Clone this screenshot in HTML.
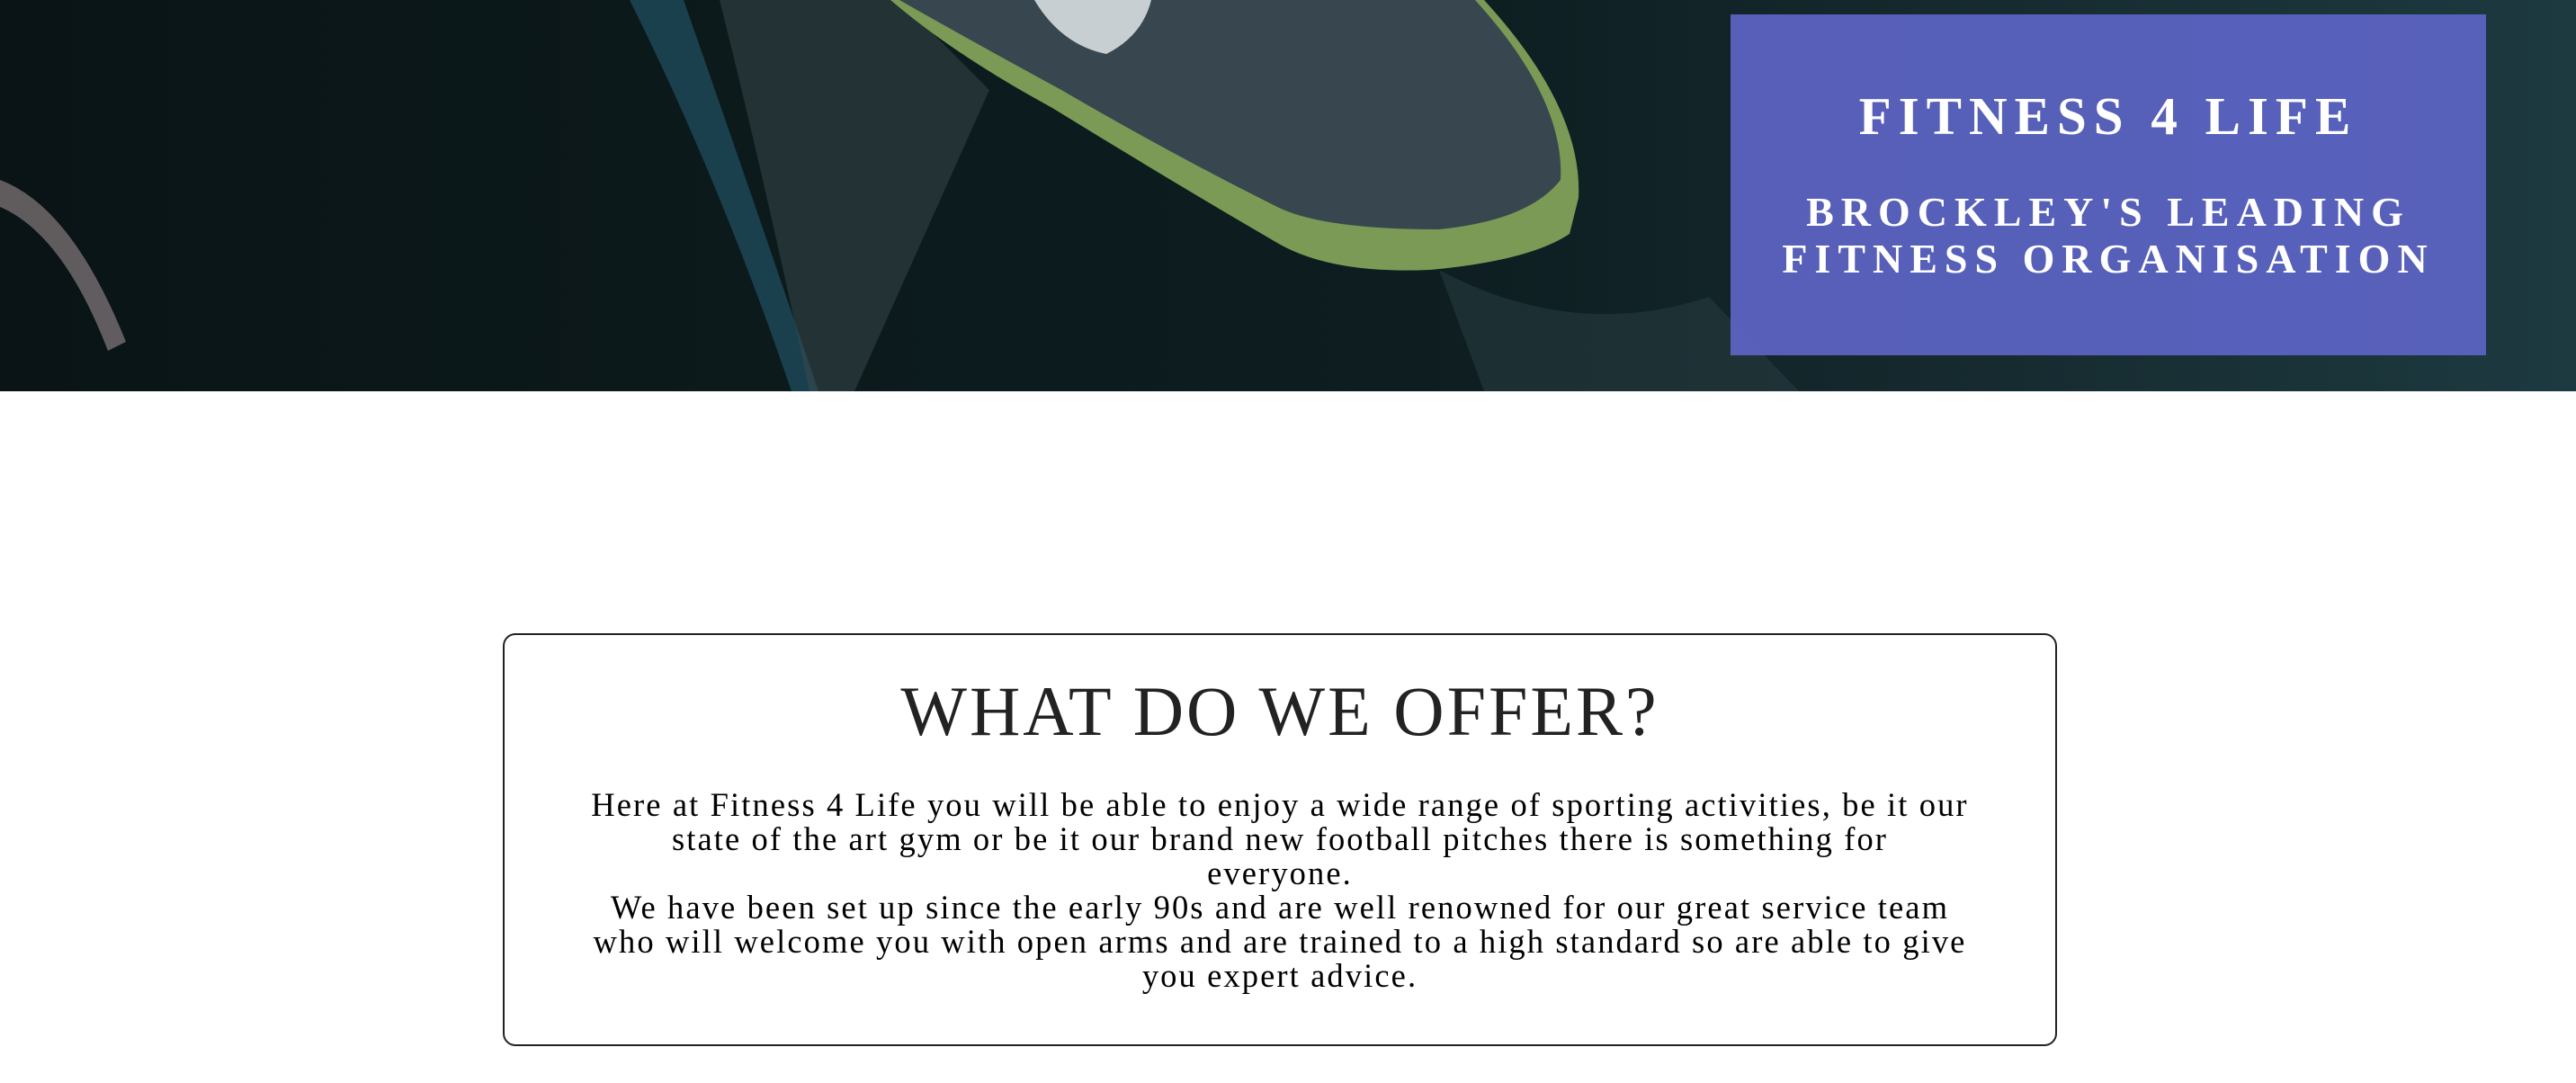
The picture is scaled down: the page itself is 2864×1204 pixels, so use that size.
<!DOCTYPE html>
<html><head><meta charset="utf-8"><style>
html,body{margin:0;padding:0;background:#fff;width:2864px;height:1204px;overflow:hidden}
.hero{position:absolute;left:0;top:0;width:2864px;height:435px;background:linear-gradient(90deg,#0a1416 0%,#0c1a1c 30%,#0d1d20 55%,#15292e 75%,#1d3a40 100%);overflow:hidden}
.box{position:absolute;left:1924px;top:16px;width:840px;height:379px;background:rgba(92,100,196,0.93);color:#fff;font-family:"Liberation Serif",serif;text-align:center}
.t1{position:absolute;top:84px;left:0;right:0;font-size:59px;letter-spacing:8px;line-height:1;font-weight:bold}
.t2{position:absolute;top:194px;left:0;right:0;font-size:46px;letter-spacing:8px;line-height:52px;font-weight:bold}
.card{position:absolute;left:559px;top:704px;width:1728px;height:459px;border:2px solid #222;border-radius:14px;box-sizing:border-box;font-family:"Liberation Serif",serif;text-align:center;color:#222}
.card h1{margin:0;position:absolute;top:46px;left:0;right:0;font-size:78px;font-weight:normal;letter-spacing:3px;line-height:1}
.card p{margin:0;position:absolute;top:170px;left:0;right:0;font-size:36.5px;line-height:38px;letter-spacing:2.1px;color:#000;white-space:nowrap}
</style></head><body>
<div class="hero">
<svg width="2864" height="435" style="position:absolute;left:0;top:0">
<path d="M700 0 L760 0 Q830 200 910 435 L880 435 Q800 200 700 0Z" fill="#1e4a5a" opacity="0.8"/>
<path d="M800 0 L1000 0 L1100 100 L950 435 L900 435 Q850 200 800 0Z" fill="#3a4a4e" opacity="0.5"/>
<path d="M990 0 L1650 0 Q1760 120 1755 220 L1745 260 Q1700 290 1590 300 Q1480 305 1420 270 Q1300 200 1170 120 Q1060 60 990 0Z" fill="#7a9a55"/>
<path d="M1000 0 L1640 0 Q1740 110 1735 200 Q1700 245 1600 255 Q1470 255 1420 230 Q1300 170 1180 100 Q1070 40 1000 0Z" fill="#38474f"/>
<path d="M1150 0 L1280 0 Q1270 40 1230 60 Q1180 50 1150 0Z" fill="#c8cfd2"/>
<path d="M1600 300 Q1750 380 1900 330 L2000 435 L1650 435Z" fill="#2a3f44" opacity="0.5"/>
<path d="M0 200 Q80 230 140 380 L120 390 Q70 260 0 230Z" fill="#9a8c90" opacity="0.6"/>
</svg>
<div class="box"><div class="t1">FITNESS 4 LIFE</div><div class="t2">BROCKLEY'S LEADING<br>FITNESS ORGANISATION</div></div>
</div>
<div class="card">
<h1>WHAT DO WE OFFER?</h1>
<p>Here at Fitness 4 Life you will be able to enjoy a wide range of sporting activities, be it our<br>state of the art gym or be it our brand new football pitches there is something for<br>everyone.<br>We have been set up since the early 90s and are well renowned for our great service team<br>who will welcome you with open arms and are trained to a high standard so are able to give<br>you expert advice.</p>
</div>
</body></html>
